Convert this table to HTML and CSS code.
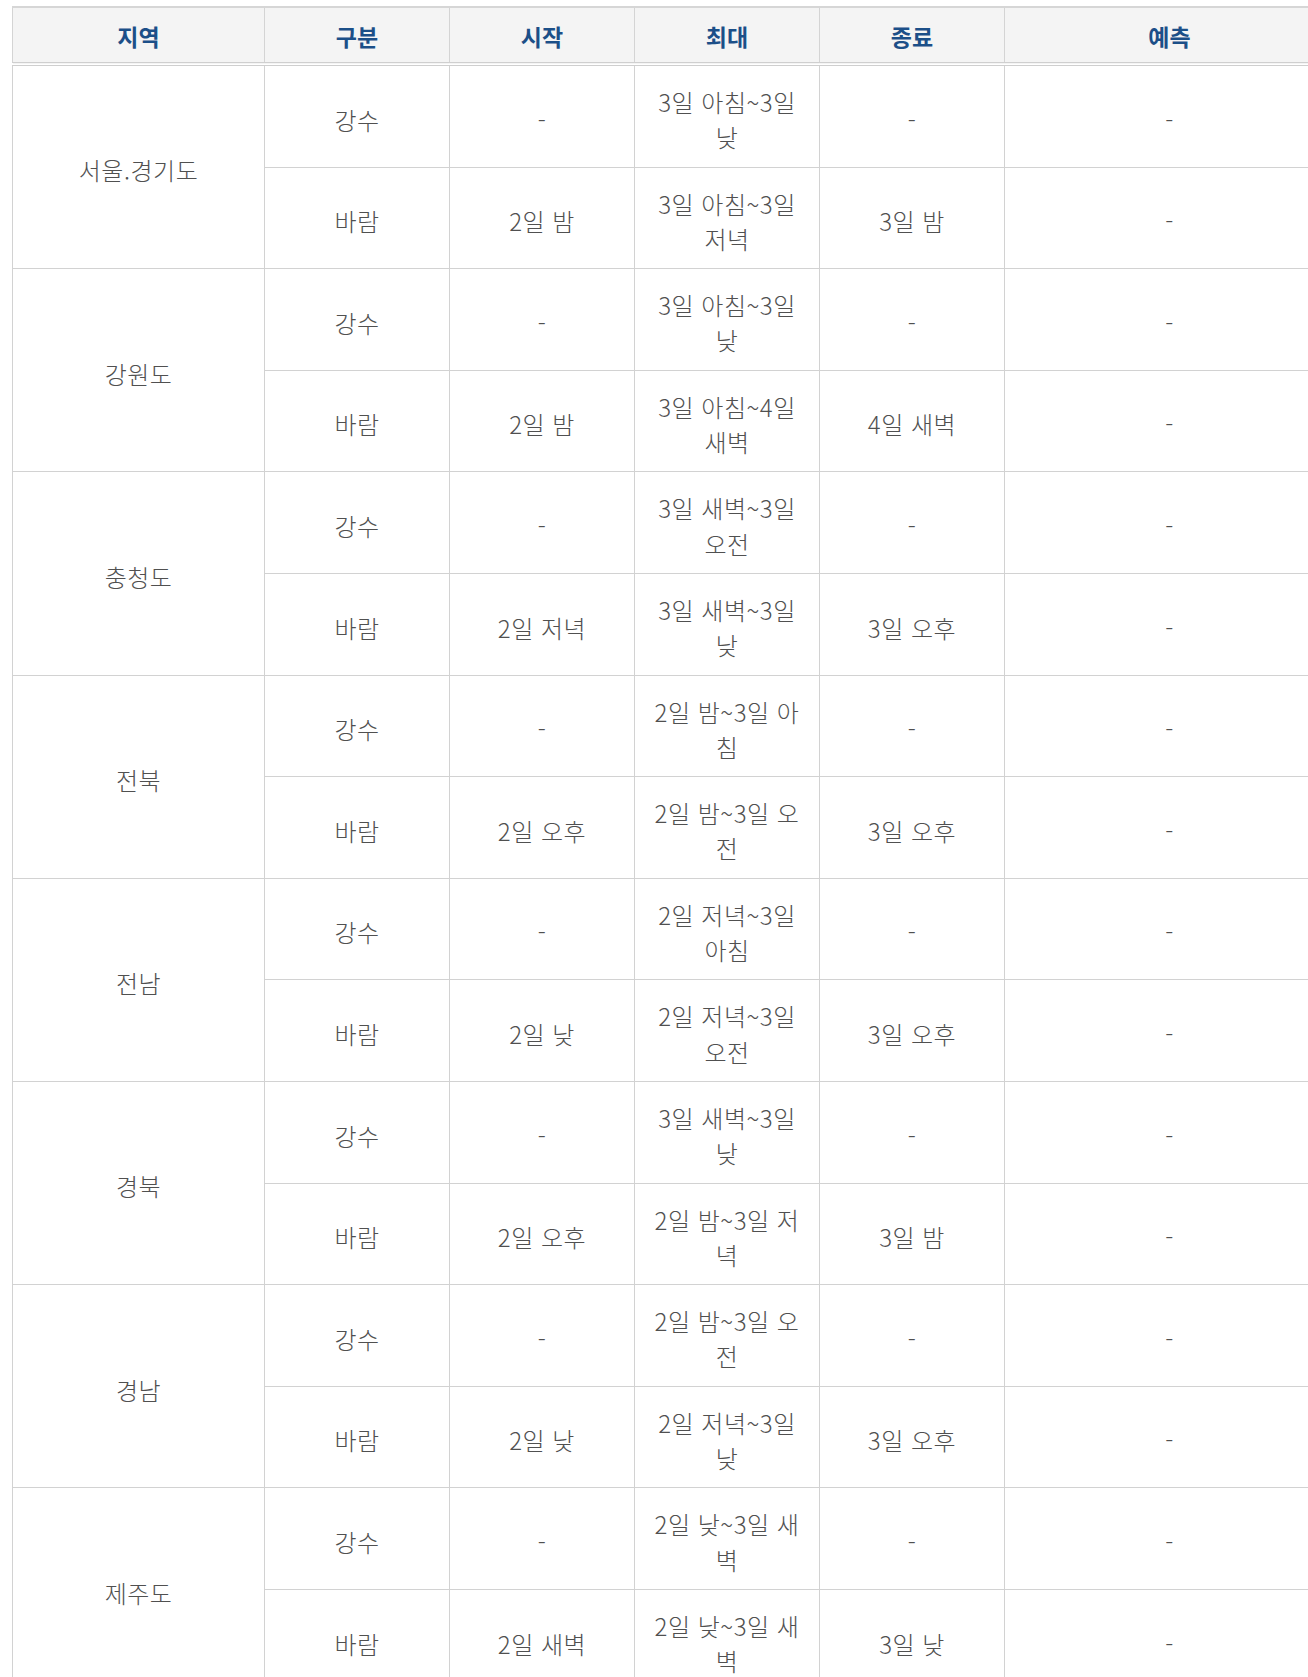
FILE: index.html
```html
<!DOCTYPE html>
<html lang="ko">
<head>
<meta charset="utf-8">
<title>특보 예상 시점</title>
<link rel="stylesheet" href="styles.css">
</head>
<body>
<table class="forecast">
  <colgroup>
    <col class="c-region"><col class="c-mid"><col class="c-mid"><col class="c-mid"><col class="c-mid"><col class="c-last">
  </colgroup>
  <thead>
    <tr><th>지역</th><th>구분</th><th>시작</th><th>최대</th><th>종료</th><th>예측</th></tr>
  </thead>
  <tbody>
    <tr><td rowspan="2">서울.경기도</td><td>강수</td><td>-</td><td>3일 아침~3일 낮</td><td>-</td><td>-</td></tr>
    <tr><td>바람</td><td>2일 밤</td><td>3일 아침~3일 저녁</td><td>3일 밤</td><td>-</td></tr>
    <tr><td rowspan="2">강원도</td><td>강수</td><td>-</td><td>3일 아침~3일 낮</td><td>-</td><td>-</td></tr>
    <tr><td>바람</td><td>2일 밤</td><td>3일 아침~4일 새벽</td><td>4일 새벽</td><td>-</td></tr>
    <tr><td rowspan="2">충청도</td><td>강수</td><td>-</td><td>3일 새벽~3일 오전</td><td>-</td><td>-</td></tr>
    <tr><td>바람</td><td>2일 저녁</td><td>3일 새벽~3일 낮</td><td>3일 오후</td><td>-</td></tr>
    <tr><td rowspan="2">전북</td><td>강수</td><td>-</td><td>2일 밤~3일 아침</td><td>-</td><td>-</td></tr>
    <tr><td>바람</td><td>2일 오후</td><td>2일 밤~3일 오전</td><td>3일 오후</td><td>-</td></tr>
    <tr><td rowspan="2">전남</td><td>강수</td><td>-</td><td>2일 저녁~3일 아침</td><td>-</td><td>-</td></tr>
    <tr><td>바람</td><td>2일 낮</td><td>2일 저녁~3일 오전</td><td>3일 오후</td><td>-</td></tr>
    <tr><td rowspan="2">경북</td><td>강수</td><td>-</td><td>3일 새벽~3일 낮</td><td>-</td><td>-</td></tr>
    <tr><td>바람</td><td>2일 오후</td><td>2일 밤~3일 저녁</td><td>3일 밤</td><td>-</td></tr>
    <tr><td rowspan="2">경남</td><td>강수</td><td>-</td><td>2일 밤~3일 오전</td><td>-</td><td>-</td></tr>
    <tr><td>바람</td><td>2일 낮</td><td>2일 저녁~3일 낮</td><td>3일 오후</td><td>-</td></tr>
    <tr><td rowspan="2">제주도</td><td>강수</td><td>-</td><td>2일 낮~3일 새벽</td><td>-</td><td>-</td></tr>
    <tr><td>바람</td><td>2일 새벽</td><td>2일 낮~3일 새벽</td><td>3일 낮</td><td>-</td></tr>
  </tbody>
</table>
</body>
</html>
```

FILE: styles.css
```css
html, body {
  margin: 0;
  padding: 0;
  background: #ffffff;
}

body {
  padding: 6px 0 0 12px;
  font-family: "Noto Sans CJK KR", "Noto Sans", sans-serif;
  overflow: hidden;
}

.forecast {
  border-collapse: collapse;
  table-layout: fixed;
  width: 1322px;
  font-size: 24px;
  letter-spacing: 0.5px;
  color: #505050;
  font-weight: 300;
}

.c-region { width: 252px; }
.c-mid { width: 185px; }
.c-last { width: 330px; }

.forecast th {
  background: #f4f4f4;
  color: #1c4f88;
  font-weight: 700;
  font-size: 23px;
  letter-spacing: 0;
  line-height: 35px;
  padding: 11px 10px 8px;
  border: 1px solid #d4d4d4;
  border-top: 2px solid #d6d6d6;
  border-bottom: 4px double #cfcfcf;
  text-align: center;
  vertical-align: middle;
}

.forecast td {
  line-height: 35.3px;
  padding: 18px 10px 12px;
  border: 1px solid #d2d2d2;
  text-align: center;
  vertical-align: middle;
}
```
